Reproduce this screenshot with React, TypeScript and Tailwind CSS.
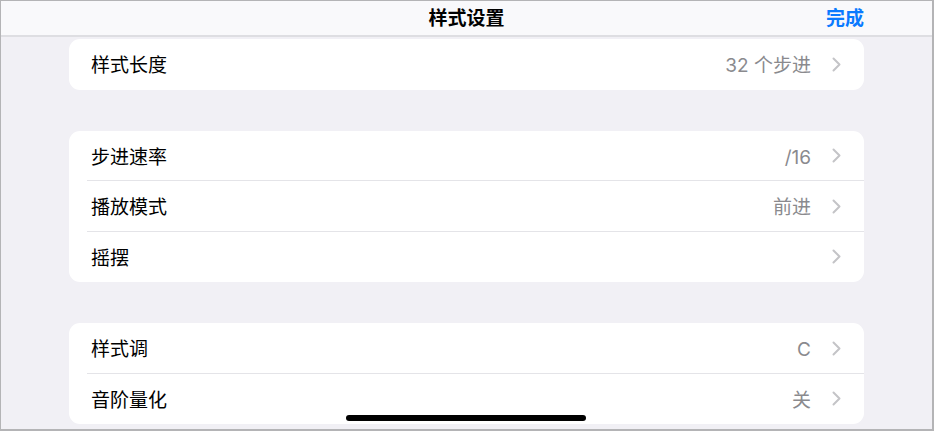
import React from 'react';

type Row = { label: string; value?: string };

const groups: Row[][] = [
  [{ label: '样式长度', value: '32 个步进' }],
  [
    { label: '步进速率', value: '/16' },
    { label: '播放模式', value: '前进' },
    { label: '摇摆' },
  ],
  [
    { label: '样式调', value: 'C' },
    { label: '音阶量化', value: '关' },
  ],
];

// Thin disclosure arrow at the end of each row
const Chevron = () => (
  <svg width="9" height="15" viewBox="0 0 9 15" fill="none" className="-mt-[4px]">
    <path d="M1.5 1.5 L7.5 7.5 L1.5 13.5" stroke="#c4c4c7" strokeWidth="2" strokeLinecap="round" strokeLinejoin="round" />
  </svg>
);

function SettingsRow({ row, last }: { row: Row; last: boolean }) {
  return (
    <div className="relative flex h-[50.5px] items-center pl-[22px] pr-[23px] pt-[4px]">
      <span className="flex-1 text-[19px] text-black">{row.label}</span>
      {row.value && <span className="mr-[21px] text-[19px] text-[#8a8a8e]">{row.value}</span>}
      <Chevron />
      {!last && <div className="absolute bottom-0 left-[18px] right-0 h-px bg-[#e4e4e8]" />}
    </div>
  );
}

export default function App() {
  return (
    <div
      className="relative h-[431px] w-[934px] overflow-hidden border-t border-l border-r-2 border-b-2 border-[#b4b4b6] bg-[#f1f0f5]"
      style={{ fontFamily: 'Inter, "Noto Sans CJK SC", sans-serif' }}
    >
      {/* Navigation bar */}
      <div className="relative flex h-[36px] items-center justify-center border-b-2 border-[#dedee2] bg-[#f9f9fb] pt-[2px]">
        <span className="text-[19px] font-bold text-black">样式设置</span>
        <span className="absolute right-[68px] text-[19px] font-bold text-[#0a7aff]">完成</span>
      </div>

      <div className="flex flex-col gap-[41px] px-[68px] pt-[2px]">
        {groups.map((rows, gi) => (
          <div key={gi} className="overflow-hidden rounded-[11px] bg-white">
            {rows.map((row, ri) => (
              <SettingsRow key={row.label} row={row} last={ri === rows.length - 1} />
            ))}
          </div>
        ))}
      </div>

      {/* Home indicator */}
      <div className="absolute left-[345px] top-[414px] h-[6px] w-[240px] rounded-full bg-black" />
    </div>
  );
}
